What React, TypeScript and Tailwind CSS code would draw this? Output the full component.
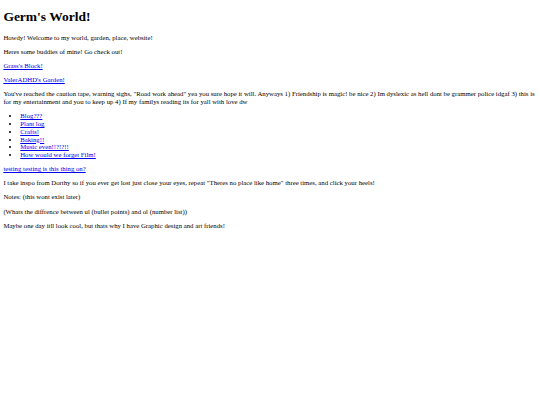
export default function App() {
  const link = "text-[#0000ee] underline";
  const items = [
    "Blog???",
    "Plant log",
    "Crafts!",
    "Baking!!",
    "Music even!!?!?!!",
    "How would we forget Film!",
  ];
  return (
    <div className="min-h-[405px] w-[540px] bg-white px-[3.375px] text-[6.75px] leading-[7.8px] text-black [font-family:'Liberation_Serif','Times_New_Roman',serif] flow-root">
      <h1 className="mt-[9.05px] mb-[9.3px] text-[13.5px] leading-[15.6px] font-bold">Germ's World!</h1>
      <p className="my-[6.3px]">Howdy! Welcome to my world, garden, place, website!</p>
      <p className="my-[6.3px]">Heres some buddies of mine! Go check out!</p>
      <p className="my-[6.3px]">
        <a href="#" className={link}>Grass's Block!</a>
      </p>
      <p className="my-[6.3px]">
        <a href="#" className={link}>ValerADHD's Garden!</a>
      </p>
      <p className="my-[6.3px]">
        You've reached the caution tape, warning sighs, "Road work ahead" yea you sure hope it will. Anyways 1) Friendship is magic! be nice 2) Im dyslexic as hell dont be grammer police idgaf 3) this is for my entertainment and you to keep up 4) If my familys reading its for yall with love dw
      </p>
      <ul className="my-[6.3px] list-disc pl-[16.875px]">
        {items.map((t) => (
          <li key={t}>
            <a href="#" className={link}>{t}</a>
          </li>
        ))}
      </ul>
      <p className="my-[6.3px]">
        <a href="#" className={link}>testing testing is this thing on?</a>
      </p>
      <p className="my-[6.3px]">
        I take inspo from Dorthy so if you ever get lost just close your eyes, repeat "Theres no place like home" three times, and click your heels!
      </p>
      <p className="my-[6.3px]">Notes: (this wont exist later)</p>
      <p className="my-[6.3px]">(Whats the diffrence between ul (bullet points) and ol (number list))</p>
      <p className="my-[6.3px]">Maybe one day itll look cool, but thats why I have Graphic design and art friends!</p>
    </div>
  );
}
